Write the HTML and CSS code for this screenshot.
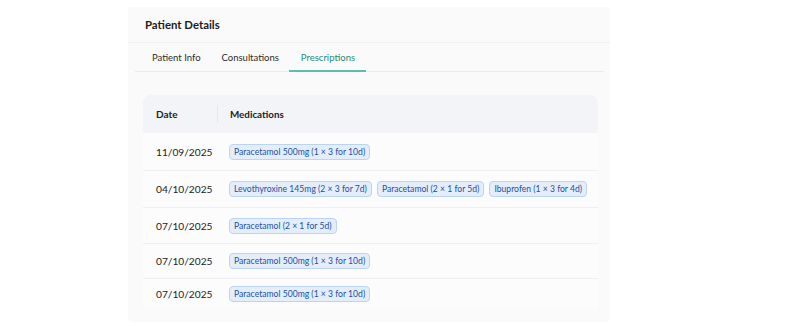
FILE: index.html
```html
<!DOCTYPE html>
<html lang="en">
<head>
  <meta charset="UTF-8" />
  <title>Patient Details</title>
  <link rel="stylesheet" href="styles.css">
</head>
<body>
  <div class="panel">
    <div class="panel-head">Patient Details</div>
    <div class="tabs">
      <div class="tab">Patient Info</div>
      <div class="tab">Consultations</div>
      <div class="tab active">Prescriptions</div>
    </div>
    <div class="table-wrap">
      <div class="thead">
        <div class="th date">Date</div>
        <div class="th meds">Medications</div>
      </div>
      <div class="row r1">
        <div class="date">11/09/2025</div>
        <div class="meds"><span class="pill">Paracetamol 500mg (1 × 3 for 10d)</span></div>
      </div>
      <div class="row r2">
        <div class="date">04/10/2025</div>
        <div class="meds">
          <span class="pill">Levothyroxine 145mg (2 × 3 for 7d)</span>
          <span class="pill">Paracetamol (2 × 1 for 5d)</span>
          <span class="pill">Ibuprofen (1 × 3 for 4d)</span>
        </div>
      </div>
      <div class="row r3">
        <div class="date">07/10/2025</div>
        <div class="meds"><span class="pill">Paracetamol (2 × 1 for 5d)</span></div>
      </div>
      <div class="row r4">
        <div class="date">07/10/2025</div>
        <div class="meds"><span class="pill">Paracetamol 500mg (1 × 3 for 10d)</span></div>
      </div>
      <div class="row last">
        <div class="date">07/10/2025</div>
        <div class="meds"><span class="pill">Paracetamol 500mg (1 × 3 for 10d)</span></div>
      </div>
    </div>
  </div>
</body>
</html>
```

FILE: styles.css
```css
body {
  margin: 0;
  background: #ffffff;
  font-family: "Lato", "Noto Sans", sans-serif;
  color: #222;
}
.panel {
  margin: 7px 0 0 128px;
  width: 482px;
  height: 315px;
  background: #fafafb;
  border-radius: 4px;
}
.panel-head {
  height: 35px;
  padding-left: 17px;
  display: flex;
  align-items: center;
  font-size: 11.4px;
  font-weight: 700;
  color: #1c1c1c;
  border-bottom: 1px solid #f0f0f2;
}
.tabs {
  display: flex;
  margin: 0 6px 0 7px;
  padding-left: 7px;
  border-bottom: 1px solid #ececef;
}
.tab {
  padding: 9px 10px 6px;
  font-size: 9.5px;
  line-height: 12px;
  color: #2a2a2a;
  border-bottom: 2px solid transparent;
  margin-bottom: -1px;
}
.tab:first-child {
  padding-right: 11px;
}
.tab.active {
  color: #1e8b7c;
  border-bottom-color: #5dbdb0;
  padding-left: 12px;
  padding-right: 11px;
}
.table-wrap {
  margin: 23px 12px 0 15px;
}
.thead {
  display: flex;
  align-items: center;
  height: 38px;
  background: #f3f4f7;
  border-radius: 8px 8px 0 0;
  font-weight: 700;
  color: #222;
}
.thead .date {
  border-right: 1px solid #e6e7ea;
  height: 18px;
  display: flex;
  align-items: center;
  font-size: 10px;
}
.thead .meds {
  font-size: 9.8px;
}
.date {
  width: 61px;
  padding-left: 13px;
  font-size: 10.2px;
  flex-shrink: 0;
}
.meds {
  padding-left: 12px;
  display: flex;
  gap: 5px;
  flex-wrap: wrap;
}
.row {
  display: flex;
  align-items: center;
  box-sizing: border-box;
  height: 37px;
  border-bottom: 1px solid #f0f0f2;
  background: #fcfcfd;
}
.row.r1 {
  height: 38px;
}
.row.r3 {
  height: 36px;
}
.row.r4 {
  height: 35px;
}
.row.last {
  border-bottom: none;
  height: 30px;
}
.pill {
  display: inline-block;
  font-size: 8.6px;
  line-height: 14px;
  padding: 0 4px;
  color: #1f4fa0;
  background: #e4eefb;
  border: 1px solid #bcd3f2;
  border-radius: 4px;
}
```
